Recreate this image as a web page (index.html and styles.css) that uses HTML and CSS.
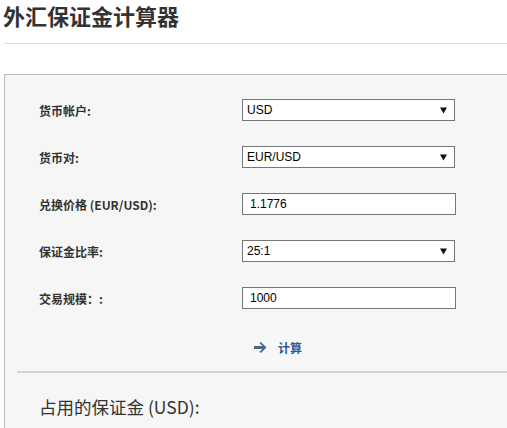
FILE: index.html
```html
<!DOCTYPE html>
<html lang="zh-CN">
<head>
<meta charset="utf-8">
<title>外汇保证金计算器</title>
<link rel="stylesheet" href="styles.css">
</head>
<body>
<div class="page">
  <h1 class="title">外汇保证金计算器</h1>
  <div class="panel">
    <div class="form">
      <div class="row">
        <label class="label">货币帐户:</label>
        <div class="select"><span>USD</span><svg class="caret" width="7" height="7" viewBox="0 0 7 7"><path d="M0 0.5H7L3.5 6.5Z" fill="#111"/></svg></div>
      </div>
      <div class="row">
        <label class="label">货币对:</label>
        <div class="select"><span>EUR/USD</span><svg class="caret" width="7" height="7" viewBox="0 0 7 7"><path d="M0 0.5H7L3.5 6.5Z" fill="#111"/></svg></div>
      </div>
      <div class="row">
        <label class="label">兑换价格 (EUR/USD):</label>
        <input class="input" type="text" value="1.1776">
      </div>
      <div class="row">
        <label class="label">保证金比率:</label>
        <div class="select"><span>25:1</span><svg class="caret" width="7" height="7" viewBox="0 0 7 7"><path d="M0 0.5H7L3.5 6.5Z" fill="#111"/></svg></div>
      </div>
      <div class="row">
        <label class="label">交易规模：:</label>
        <input class="input" type="text" value="1000">
      </div>
      <div class="actions">
        <button class="calc" type="button">
          <svg width="13" height="11" viewBox="0 0 13 11"><path d="M0 4H8.5L5.5 1.2L6.8 0L12.5 5.5L6.8 11L5.5 9.8L8.5 7H0Z" fill="#47678f"/></svg>
          <span>计算</span>
        </button>
      </div>
    </div>
    <div class="result">
      <div class="result-title">占用的保证金 (USD):</div>
    </div>
  </div>
</div>
</body>
</html>
```
FILE: styles.css
```css
html, body {
  margin: 0;
  padding: 0;
  background: #fff;
  overflow: hidden;
}
body {
  font-family: "Noto Sans CJK SC", "Noto Sans", sans-serif;
  color: #333;
}
.page {
  padding-left: 4px;
}
.title {
  margin: 0;
  font-size: 22px;
  font-weight: 700;
  line-height: 30px;
  height: 44px;
  border-bottom: 1px solid #dcdcdc;
  box-sizing: border-box;
  text-indent: -1px;
  color: #333;
}
.panel {
  margin-top: 30px;
  border: 1px solid #bcbcbc;
  border-right: 0;
  border-bottom: 0;
  background: #f6f6f6;
}
.form {
  padding: 24px 0 0 34px;
  display: flex;
  flex-direction: column;
  gap: 25px;
}
.row {
  display: flex;
  align-items: center;
  height: 22px;
}
.label {
  width: 203px;
  font-size: 12px;
  font-weight: 700;
  color: #333;
}
.select, .input {
  box-sizing: border-box;
  width: 213px;
  height: 22px;
  border: 1px solid #767676;
  background: #fff;
  font-family: "Liberation Sans", Arial, sans-serif;
  font-size: 12px;
  color: #000;
}
.select {
  display: flex;
  align-items: center;
  justify-content: space-between;
  padding: 0 7px 0 4px;
}
.caret { display: block; }
.input {
  width: 214px;
  padding: 0 0 0 7px;
  outline: none;
  margin: 0;
}
.actions {
  padding-left: 203px;
  margin-top: 1px;
}
.calc {
  display: flex;
  align-items: center;
  gap: 11px;
  height: 25px;
  padding: 0 12px;
  border: 0;
  background: #f7f7f7;
  font-family: "Noto Sans CJK SC", sans-serif;
  font-size: 12px;
  font-weight: 700;
  color: #2a5a96;
  cursor: pointer;
}
.calc svg { display: block; }
.result {
  margin: 11px 0 0 12px;
  border-top: 2px solid #d2d2d2;
  padding: 21px 0 8px 22px;
}
.result-title {
  font-size: 17.5px;
  line-height: 26px;
  color: #333;
}
```
